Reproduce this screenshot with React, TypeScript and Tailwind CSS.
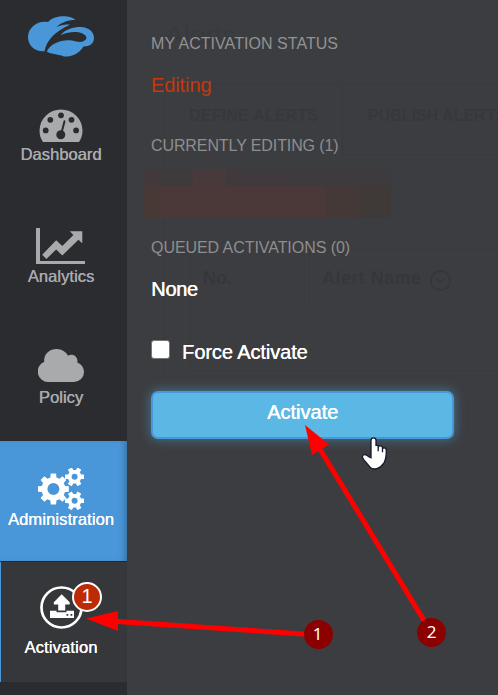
import type { ReactNode } from 'react';

function gear(cx: number, cy: number, outer: number, inner: number, hole: number, teeth: number, turn = 0) {
  const pts: string[] = [];
  const step = (Math.PI * 2) / teeth;
  const at = (r: number, a: number) => `${(cx + r * Math.sin(a)).toFixed(2)},${(cy - r * Math.cos(a)).toFixed(2)}`;
  for (let i = 0; i < teeth; i++) {
    const a = i * step + turn;
    pts.push(at(inner, a - step * 0.32), at(outer, a - step * 0.22), at(outer, a + step * 0.22), at(inner, a + step * 0.32));
  }
  return `M${pts.join('L')}ZM${cx - hole},${cy}a${hole},${hole} 0 1,0 ${hole * 2},0a${hole},${hole} 0 1,0 ${-hole * 2},0Z`;
}

function Logo() {
  return (
    <svg className="ml-7 mt-4 h-[41px] w-[66px] shrink-0" viewBox="28 16 66 41" fill="#4997d8">
      <path d="M75.5 20C71 15.5 56 14 48 22C37 20 28 28 28 37C28 46 35 52 44.5 51.3C46.5 41 54 32 70 24.8C66 24 61 25 56.5 27C61 22.5 68 19.8 75.5 20Z" />
      <path fillRule="evenodd" d="M60.5 35.3C65 29.5 73 27 80.5 27C89 27 94 32 94 38C94 43 90 46.5 83.5 46.5C79 54 71 57 64 56.5C57 53.5 51 54.5 46.8 51.5C50 44 60 40 69 40.3C75 40.5 79 43 83 41.5C88 39.5 87.5 35.5 82 33.3C76 31 68 32 60.5 35.3Z" />
    </svg>
  );
}

function GaugeIcon() {
  return (
    <svg className="h-[34px] w-11" viewBox="0 0 44 34">
      <path fill="#a9aaac" d="M4 33Q.5 28 .5 21.5A21.5 21 0 0 1 43.5 21.5Q43.5 28 40 33Z" />
      <g fill="#2b2c30">
        <circle cx="6.7" cy="21.4" r="2.9" />
        <circle cx="11.3" cy="10.8" r="2.9" />
        <circle cx="22" cy="6.3" r="2.9" />
        <circle cx="32.5" cy="10.8" r="2.9" />
        <circle cx="37.1" cy="21.4" r="2.9" />
        <circle cx="21.8" cy="25.8" r="4.5" />
      </g>
      <path d="M22.5 24L25.5 12.3" stroke="#2b2c30" strokeWidth="2" strokeLinecap="round" />
    </svg>
  );
}

function ChartIcon() {
  return (
    <svg className="h-9 w-[50px]" viewBox="0 0 50 36" fill="#a9aaac">
      <path d="M0 0H4V33H49V36H0Z" />
      <path d="M6.2 26.7L20.2 12.2L26.3 18.1L37.4 7L33.8 3.2H46.3V15.2L42.4 11.8L26.3 27.5L20.2 21.5L10.4 31Z" />
    </svg>
  );
}

function CloudIcon() {
  return (
    <svg className="h-[33px] w-[46px]" viewBox="0 0 46 33" fill="#a9aaac">
      <path d="M10.5 33A10.5 10.5 0 0 1 6.2 12.8C5.5 5 11.5 0 18.5 0C24 0 28 3 30 6.7C35 4 40.5 8 39.3 13.5C43.2 15 46 18.7 46 23A10 10 0 0 1 36 33Z" />
    </svg>
  );
}

function GearsIcon() {
  return (
    <svg className="h-[42px] w-[46px]" viewBox="0 0 46 42" fill="#fff" fillRule="evenodd">
      <path d={gear(15.4, 21, 15.7, 12, 6, 8)} />
      <path d={gear(36.6, 8.8, 9.8, 6.9, 3, 6, Math.PI / 6)} />
      <path d={gear(36.6, 32.8, 9.8, 6.9, 3, 6, Math.PI / 6)} />
    </svg>
  );
}

function UploadIcon() {
  return (
    <svg className="ml-px h-11 w-11" viewBox="0 0 44 44">
      <circle cx="21.5" cy="21.5" r="20" fill="none" stroke="#fff" strokeWidth="2.7" />
      <path fill="#fff" d="M21.7 8.3L29.7 16.3V18.5H25.2V24.5H18.2V18.5H13.8V16.3Z" />
      <path fill="#fff" fillRule="evenodd" d="M10 24.8H16.5V26.3H26.5V24.8H34V32H10ZM26.5 28H28.3V29.8H26.5ZM30.5 28H32.3V29.8H30.5Z" />
    </svg>
  );
}

function NavItem({ icon, label, tone }: { icon: ReactNode; label: string; tone: string }) {
  return (
    <div className={`flex shrink-0 flex-col items-center ${tone}`}>
      {icon}
      <span className="whitespace-nowrap">{label}</span>
    </div>
  );
}

function Backdrop() {
  return (
    <div className="pointer-events-none absolute inset-0 overflow-hidden text-[#35373a]">
      <span className="absolute left-[38px] top-5 text-[28px] leading-8 text-[#393a3d]">Alerts</span>
      <div className="absolute bottom-[320px] left-[37px] top-[84px] w-full border-l border-t border-[#393a3d]" />
      <div className="absolute left-[215px] top-[84px] h-[71px] w-full border-b border-l border-[#393a3d]" />
      <span className="absolute left-[62px] top-[106px] whitespace-nowrap text-base font-bold leading-5 tracking-[0.2px] text-[#36383b]">DEFINE ALERTS</span>
      <span className="absolute left-[241px] top-[106px] whitespace-nowrap text-base font-bold leading-5 text-[#36383b]">PUBLISH ALERTS</span>
      <div className="absolute left-[63px] top-[249px] h-[122px] w-full border border-[#3a3a3d]" />
      <div className="absolute left-[182px] top-[249px] h-[60px] border-l border-[#3a3a3d]" />
      <span className="absolute left-[76px] top-[267px] text-lg font-bold leading-[22px]">No.</span>
      <span className="absolute left-[195px] top-[267px] whitespace-nowrap text-lg font-bold leading-[22px] tracking-[0.45px]">Alert Name</span>
      <svg className="absolute left-[303px] top-[270px] h-[22px] w-[22px]" viewBox="0 0 22 22" fill="none" stroke="currentColor" strokeWidth="1.7">
        <circle cx="10.5" cy="10.5" r="9.6" />
        <path d="M7 9L10.5 12.5L14 9" />
      </svg>
    </div>
  );
}

function Redacted() {
  return (
    <div className="ml-[-8px] mt-[13px] w-[248px]">
      <div className="flex h-[17px]">
        <div className="w-[17px] bg-[#41393b]" />
        <div className="w-[33px] bg-[#3f3a3b]" />
        <div className="w-[33px] bg-[#48393a]" />
        <div className="w-[66px] bg-[#40393d]" />
        <div className="w-[99px] bg-[#3d3b3d]" />
      </div>
      <div className="flex h-8">
        <div className="w-[17px] bg-[#483937]" />
        <div className="w-[165px] bg-[#4a3938]" />
        <div className="w-[33px] bg-[#453938]" />
        <div className="w-[33px] bg-[#3f3938]" />
      </div>
    </div>
  );
}

function Annotations() {
  return (
    <>
      <svg className="pointer-events-none absolute inset-0 h-[695px] w-[498px]" viewBox="0 0 498 695">
        <path d="M318 635L110 621" stroke="#f00" strokeWidth="5" />
        <path d="M86 618.5L118 611V631Z" fill="#f00" />
        <path d="M431 632L318 446" stroke="#f00" strokeWidth="5" />
        <path d="M305 425L329 444.5L312 455Z" fill="#f00" />
        <path d="M369.3 456.5C365 452.5 361 455 364 459L370.3 466.5C374 471 381 468 384.5 462.5Q387 458 386.8 450Q386.8 447.5 384.7 447.5Q383 447.5 383 449V452V447.5Q383 445.5 380.8 445.5Q378.7 445.5 378.7 447.5V451V446.5Q378.7 444.7 376.5 445V440Q376.5 437.5 374 437.5Q371.5 437.5 371.5 440V457.5Z" fill="#fff" stroke="#15172b" strokeWidth="1.3" transform="translate(-.5 .3)" />
      </svg>
      <span className="absolute left-[304px] top-[620px] flex size-[29px] items-center justify-center rounded-full bg-[#8b0000] pb-0.5 pr-0.5 font-['Noto_Sans',sans-serif] text-[17px] text-white">1</span>
      <span className="absolute left-[417px] top-[618px] flex size-[29px] items-center justify-center rounded-full bg-[#8b0000] pb-0.5 font-['Noto_Sans',sans-serif] text-[17px] text-white">2</span>
    </>
  );
}

export default function App() {
  return (
    <div className="relative flex h-[695px] w-[498px] overflow-hidden bg-[#3c3d40] font-['Liberation_Sans',Arial,sans-serif]">
      <nav className="flex w-[127px] shrink-0 flex-col bg-[#2b2c30] text-[16.5px] leading-5 tracking-[0.05px] [text-shadow:0.3px_0_currentColor]">
        <Logo />
        <NavItem icon={<GaugeIcon />} label="Dashboard" tone="mt-[52px] h-[119px] pr-[5px] gap-px text-[#a9aaac]" />
        <NavItem icon={<ChartIcon />} label="Analytics" tone="h-[121px] pr-[5px] gap-0.5 text-[#a9aaac]" />
        <NavItem icon={<CloudIcon />} label="Policy" tone="h-[92px] pr-[5px] gap-[5px] text-[#a9aaac]" />
        <NavItem icon={<GearsIcon />} label="Administration" tone="h-[120px] bg-[#4997d8] pr-[5px] pt-[27px] text-white tracking-[0.12px] [&>span]:-mt-px shadow-[inset_-5px_0_6px_-3px_#386f9e]" />
        <div className="h-px shrink-0 bg-[#242529]" />
        <div className="relative h-[120px] shrink-0 border-l border-[#4997d8] bg-[#36373a]">
          <NavItem icon={<UploadIcon />} label="Activation" tone="pr-1.5 pt-6 gap-[7px] text-white tracking-[0.15px]" />
          <span className="absolute left-[71px] top-5 flex size-[30px] items-center justify-center rounded-full border-2 border-white bg-[#bd2b06] pb-0.5 text-xl text-white [text-shadow:none]">1</span>
        </div>
      </nav>
      <main className="relative min-w-0 flex-1">
        <Backdrop />
        <section className="relative flex flex-col pl-6 pt-[34px] text-white">
          <h2 className="whitespace-nowrap text-base leading-5 tracking-[0.05px] text-[#929292]">MY ACTIVATION STATUS</h2>
          <p className="mt-[19px] text-xl leading-6 tracking-[-0.1px] text-[#c8360b]">Editing</p>
          <h2 className="mt-[39px] whitespace-nowrap text-base leading-5 tracking-[-0.1px] text-[#8e8e8e]">CURRENTLY EDITING (1)</h2>
          <Redacted />
          <h2 className="mt-5 whitespace-nowrap text-base leading-5 tracking-[-0.06px] text-[#8e8e8e]">QUEUED ACTIVATIONS (0)</h2>
          <p className="mt-[19px] text-xl leading-6 tracking-[-0.3px] [text-shadow:0.5px_0_currentColor]">None</p>
          <label className="mt-[39px] flex h-6 text-[20px] leading-6 tracking-[-0.08px]">
            <input type="checkbox" className="mr-3 size-[19px] shrink-0 appearance-none rounded-[3px] border border-[#777] bg-white" />
            <span className="[text-shadow:0.3px_0_currentColor]">Force Activate</span>
          </label>
          <button className="mt-[27px] h-12 w-[303px] rounded-[7px] border-2 border-[#4997d8] bg-[#5bb8e5] pb-1.5 text-[20px] leading-6 shadow-[0_0_12px_#447c9c] [text-shadow:0.5px_0_currentColor]">Activate</button>
        </section>
      </main>
      <Annotations />
    </div>
  );
}
